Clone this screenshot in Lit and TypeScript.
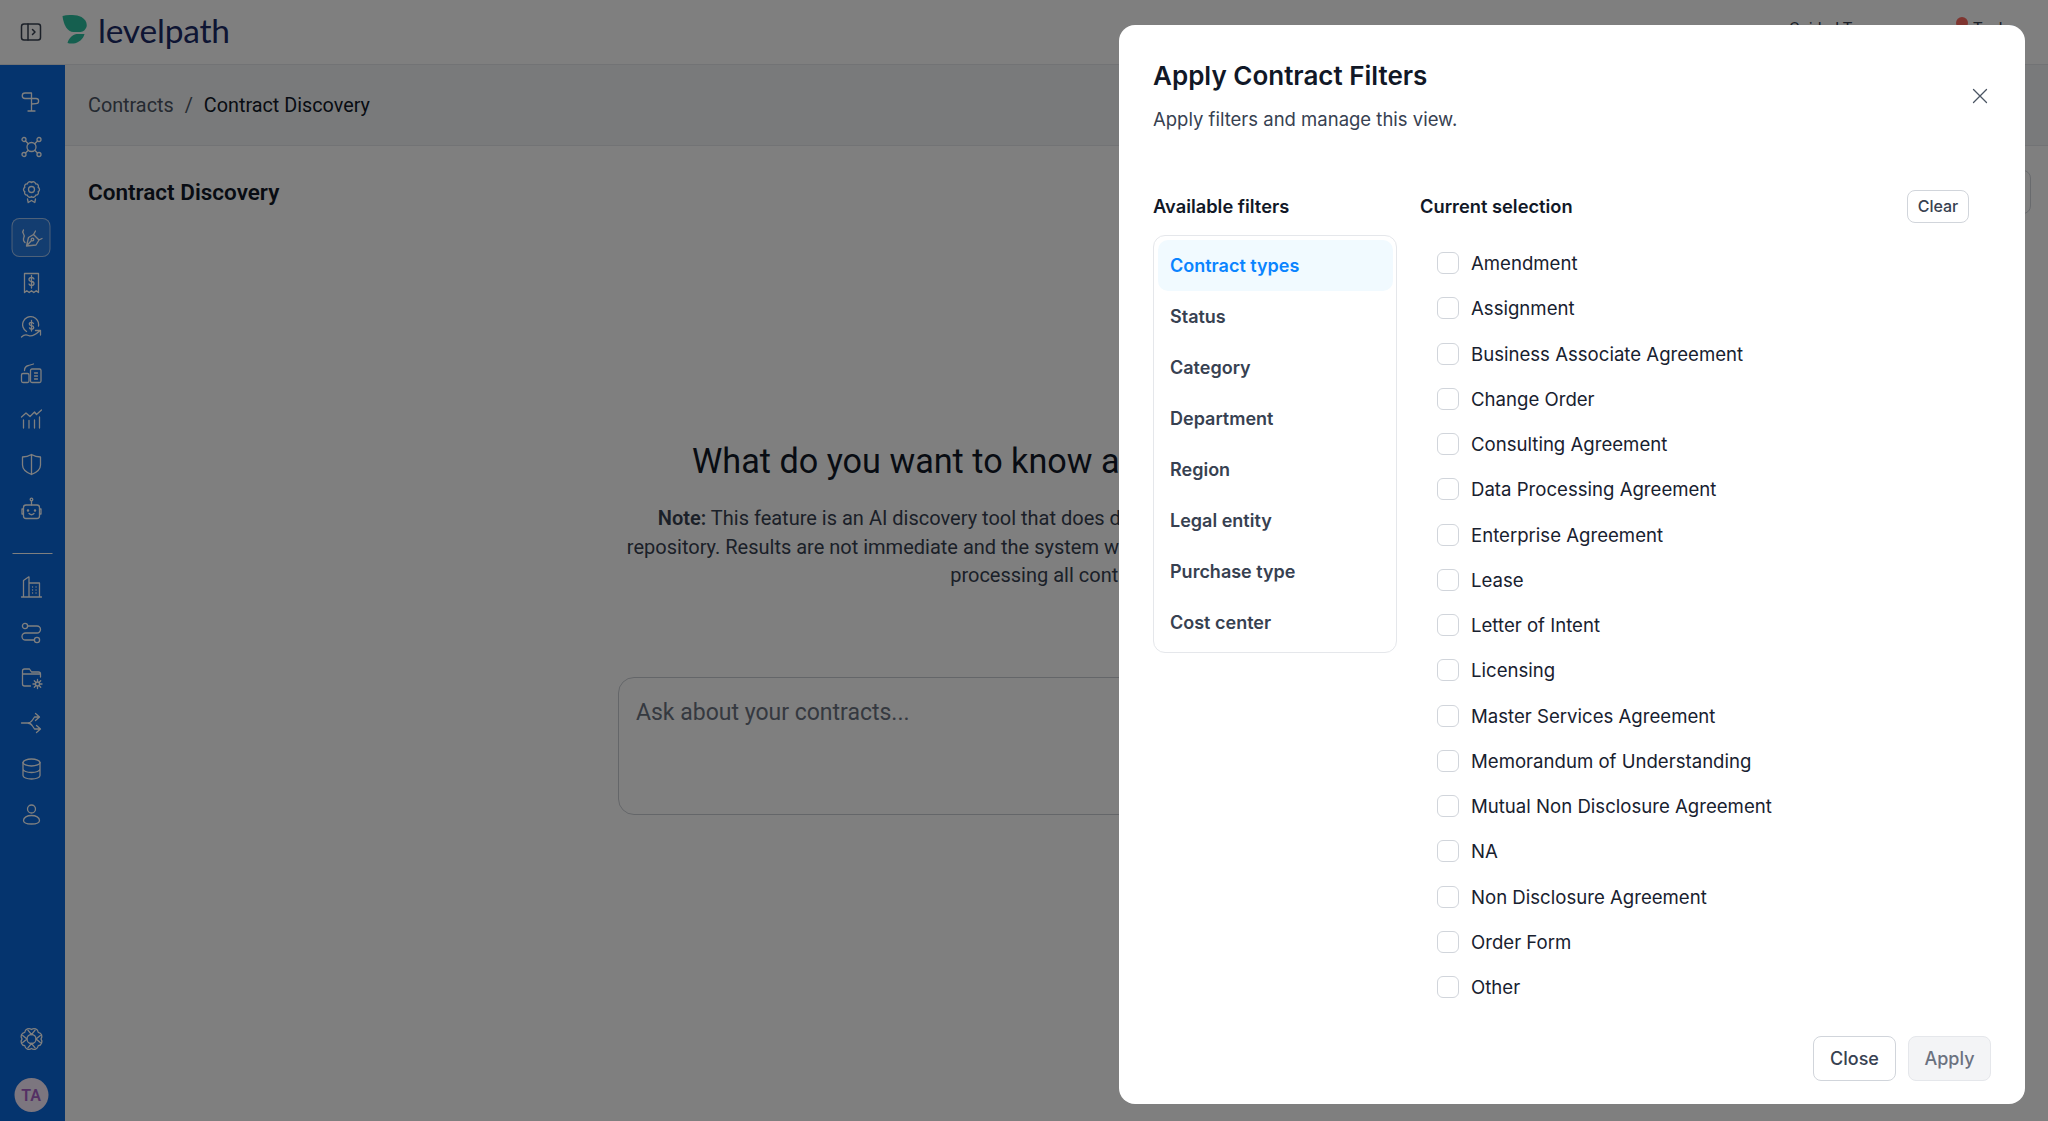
import { LitElement, html, css, svg } from "lit";
import { customElement, state } from "lit/decorators.js";

function scallop(cx: number, cy: number, r: number, n: number, bump: number) {
  let d = "";
  for (let i = 0; i <= n; i++) {
    const a = (i / n) * Math.PI * 2 - Math.PI / 2;
    const x = (cx + r * Math.cos(a)).toFixed(2);
    const y = (cy + r * Math.sin(a)).toFixed(2);
    d += i === 0 ? `M${x} ${y}` : `A${bump} ${bump} 0 0 1 ${x} ${y}`;
  }
  return d + "z";
}

const ICONS: Record<string, unknown> = {
  sign: svg`<path d="M12 8.500V21M8.500 21h7M12 3H5.500a2.700 2.700 0 0 0 0 5.500H12zM12 8.500h4.500c3.500 0 3.500 5 0 5.200L12 14"/>`,
  nodes: svg`<circle cx="12" cy="12" r="4.500"/><circle cx="4.500" cy="4.500" r="2"/><circle cx="19.500" cy="4.500" r="2"/><circle cx="4.500" cy="19.500" r="2"/><circle cx="19.500" cy="19.500" r="2"/><path d="M6 6l2.800 2.800M18 6l-2.800 2.800M6 18l2.800-2.800M18 18l-2.800-2.800"/>`,
  award: svg`<path d="${scallop(12, 9.5, 7, 10, 2.4)}"/><circle cx="12" cy="9.500" r="3"/><path d="M8 19l.7 3.500L12 20.500l3.300 2L16 19"/>`,
  pen: svg`<path d="M7 21l2-8.500 5-3 5.500 5.500-3 5-9.500 1zM7 21l5-5.500M14 9.500l2-3.500M19.500 15l3-1.500"/><circle cx="13" cy="14.500" r="1.300"/><path d="M4 5c-2.500 3 1.800 4 .5 7s-.7 4 1 5.500"/>`,
  receipt: svg`<path d="M5 2.500h14v19l-2.300-1.800-2.400 1.800-2.300-1.800-2.300 1.800-2.400-1.800L5 21.500z"/><path d="M14.500 8c-.4-1-1.300-1.500-2.500-1.500-1.500 0-2.500 .8-2.500 2s1 1.800 2.500 2 2.500 .8 2.500 2-1 2-2.500 2c-1.200 0-2.100-.5-2.500-1.500M12 4.500v12.500"/>`,
  savings: svg`<path d="M7 15.500a8 8 0 1 1 12-5.500"/><path d="M14 7.500c-.4-.8-1.100-1.200-2-1.200-1.300 0-2.200 .7-2.200 1.700s.9 1.500 2.200 1.700 2.200 .7 2.200 1.700-.9 1.700-2.200 1.700c-.9 0-1.600-.4-2-1.200M12 4.500v10.500"/><path d="M2 21c3-3 5-2.500 7-1.500s5 1 11-4.500M16 14.500h5V19"/>`,
  build: svg`<rect x="2" y="12.500" width="7.500" height="9" rx="1.500"/><rect x="11" y="8" width="10.500" height="13.500" rx="1.500"/><path d="M5 9.500c0-2.500 2-4.500 4-5l5-1.500M15 12h3M15 15h3M15 18h3"/>`,
  chart: svg`<path d="M2 10l4.500-4 4 3.500L15 5l2 2.500L22 3M4 21v-8M9.500 21v-7.500M15 21v-8M20 21V10"/>`,
  shield: svg`<path d="M12 2.500c3 1.800 6 2.500 9 2.500v8c0 4.500-4 7.500-9 9.500-5-2-9-5-9-9.500V5c3 0 6-.7 9-2.500zM12 2.500v20"/>`,
  bot: svg`<circle cx="12" cy="2.500" r="1.300"/><path d="M12 4v4"/><rect x="4" y="8" width="16" height="13.500" rx="2.500"/><path d="M4 12H2.500v5H4M20 12h1.500v5H20M9.500 16.500c1.500 1.500 3.500 1.500 5 0"/><circle cx="8.500" cy="13.500" r=".6"/><circle cx="15.500" cy="13.500" r=".6"/>`,
  office: svg`<path d="M2 22h20M4 22V5.500l5-3.500h.5V22M9.500 8H20v14M13 12h.1M16.500 12h.1M13 15h.1M16.500 15h.1M13 18h.1M16.500 18h.1"/>`,
  route: svg`<circle cx="5.500" cy="5" r="2.600"/><circle cx="17.500" cy="19" r="2.600"/><path d="M8.500 5h9a3.500 3.500 0 0 1 0 7H6a3.500 3.500 0 0 0 0 7h8.500"/>`,
  folder: svg`<path d="M11 20H5a2 2 0 0 1-2-2V5a2 2 0 0 1 2-2h5l2 3h7a2 2 0 0 1 2 2v3M3 8h18"/><circle cx="18" cy="18" r="2"/><path d="M18 13.500v2M18 20.500v2M13.500 18h2M20.500 18h2M14.800 14.800l1.400 1.400M19.800 19.800l1.400 1.400M14.800 21.200l1.400-1.400M19.800 16.200l1.400-1.400"/>`,
  split: svg`<path d="M2 12h6c3 0 4-1.500 5-3l2-3h4M8 12c3 0 4 1.500 5 3l2 3h6M16 2.500L20 6l-4 3.500M17 14.500l4 3.500-4 3.500"/>`,
  db: svg`<ellipse cx="12" cy="5.500" rx="8.500" ry="3.500"/><path d="M3.500 5.500v13c0 2 3.800 3.500 8.500 3.500s8.500-1.500 8.500-3.500v-13M3.500 12c0 2 3.800 3.500 8.500 3.500s8.500-1.500 8.500-3.500"/>`,
  user: svg`<circle cx="12" cy="7" r="4"/><path d="M4 18.500c0-3 3.500-5 8-5s8 2 8 5-3.500 3.500-8 3.500-8-.5-8-3.500z"/>`,
  ring: svg`<path d="${scallop(12, 12, 9.5, 8, 4.2)}"/><circle cx="12" cy="12" r="4.500"/><path d="M12 7.500L8.400 3.200M12 7.500l3.600-4.300M16.500 12l4.300-3.600M16.500 12l4.300 3.600M12 16.500l3.600 4.300M12 16.500l-3.600 4.300M7.500 12L3.200 15.600M7.500 12L3.200 8.400"/>`,
};

const TOP = ["sign", "nodes", "award", "pen", "receipt", "savings", "build", "chart", "shield", "bot"];
const MID = ["office", "route", "folder", "split", "db", "user"];
const FILTERS = ["Contract types", "Status", "Category", "Department", "Region", "Legal entity", "Purchase type", "Cost center"];
const OPTIONS = [
  "Amendment", "Assignment", "Business Associate Agreement", "Change Order", "Consulting Agreement",
  "Data Processing Agreement", "Enterprise Agreement", "Lease", "Letter of Intent", "Licensing",
  "Master Services Agreement", "Memorandum of Understanding", "Mutual Non Disclosure Agreement", "NA",
  "Non Disclosure Agreement", "Order Form", "Other",
];

@customElement("app-root")
export class AppRoot extends LitElement {
  @state() active = "Contract types";
  @state() checked = new Set<string>();

  static styles = css`
    :host { display: block; position: relative; width: 100%; height: 100vh; overflow: hidden; background: #fff; font-family: Roboto, "Liberation Sans", sans-serif; color: #111827; }
    .top { height: 64px; border-bottom: 1px solid #e5e7eb; display: flex; align-items: center; padding-left: 20px; gap: 20px; position: relative; }
    .toggle { width: 22px; height: 22px; color: #374151; }
    .brand { display: flex; align-items: center; gap: 10px; margin-top: -4px; }
    .leaf { width: 26px; height: 29px; display: block; margin-top: -2px; }
    .word { font-family: Lato, sans-serif; font-weight: 400; font-size: 33.500px; line-height: 36px; color: #1a2a66; letter-spacing: -0.2px; }
    .peek { position: absolute; left: 1789px; top: 19px; font-size: 16px; line-height: 20px; color: #374151; }
    .peek2 { position: absolute; left: 1973px; top: 19px; font-size: 16px; line-height: 20px; color: #374151; }
    .dot { position: absolute; left: 1956px; top: 17px; width: 12px; height: 12px; border-radius: 50%; background: #ff6b60; }
    .body { display: flex; height: calc(100vh - 65px); }
    .side { width: 65px; flex: none; background: #0a68dd; display: flex; flex-direction: column; align-items: center; padding: 14px 0 9px 0; box-sizing: border-box; color: #fff; }
    .ic { width: 39px; height: 39px; margin: 3.150px 0; flex: none; display: flex; align-items: center; justify-content: center; box-sizing: border-box; border-radius: 8px; transform: translateX(-1.500px); }
    .ic svg { width: 24px; height: 24px; fill: none; stroke: currentColor; stroke-width: 1.300; stroke-linecap: round; stroke-linejoin: round; }
    .ic.on { background: rgba(255,255,255,.12); border: 1.500px solid rgba(255,255,255,.55); }
    .rule { width: 40px; height: 1px; background: #fff; margin: 21px 0 11px; transform: translateX(-.500px); flex: none; }
    .grow { flex: 1; }
    .avatar { width: 34px; height: 34px; border-radius: 50%; background: #f8ecff; color: #a860c8; font-size: 16px; font-weight: 600; display: flex; align-items: center; justify-content: center; margin-top: 16px; transform: translateX(-1.500px); }
    main { flex: 1; min-width: 0; display: flex; flex-direction: column; }
    .crumbs { height: 80px; background: #f3f4f6; border-bottom: 1px solid #e5e7eb; display: flex; align-items: center; padding-left: 23px; font-size: 19.800px; color: #4b5563; gap: 11px; flex: none; }
    .crumbs b { font-weight: 400; color: #111827; }
    .head { padding: 24px 23px 0; display: flex; justify-content: space-between; align-items: center; }
    .head h2 { margin: 0; font-size: 22.500px; font-weight: 600; line-height: 30px; color: #111827; }
    .ghost { width: 60px; height: 44px; border: 1px solid #d1d5db; border-radius: 8px; box-sizing: border-box; margin-right: -6px; }
    .hero { display: flex; flex-direction: column; align-items: center; text-align: center; margin-top: 225px; }
    .hero h1 { margin: 0; padding-left: 10px; font-size: 34.200px; font-weight: 400; line-height: 44px; color: #111827; white-space: nowrap; }
    .hero p { margin: 21px 0 0; font-size: 20px; line-height: 28.500px; color: #374151; white-space: nowrap; }
    .hero p strong { font-weight: 600; }
    .ask { width: 877px; height: 138px; box-sizing: border-box; margin-top: 87px; border: 1px solid #c9cdd3; border-radius: 16px; padding: 20px 17px; text-align: left; font-size: 23px; line-height: 30px; color: #6b7280; }
    .scrim { position: absolute; inset: 0; background: rgba(0,0,0,.5); }
    .modal { position: absolute; left: 1119px; top: 25px; width: 906px; height: 1079px; box-sizing: border-box; background: #fff; border-radius: 16px; padding: 32px 34px 23px; display: flex; flex-direction: column; font-family: Inter, "Liberation Sans", sans-serif; }
    .mhead { position: relative; flex: none; }
    .mhead h3 { margin: 0; font-size: 26px; line-height: 38px; font-weight: 600; color: #111827; }
    .mhead p { margin: 9.500px 0 0; font-size: 18.500px; line-height: 28px; color: #374151; }
    .x { position: absolute; right: 3px; top: 31px; width: 16px; height: 16px; background: none; border: 0; padding: 0; color: #4b5563; cursor: pointer; }
    .x svg { display: block; width: 16px; height: 16px; fill: none; stroke: currentColor; stroke-width: 1.300; stroke-linecap: round; }
    .cols { flex: 1; display: flex; gap: 23px; margin-top: 57px; min-height: 0; }
    .left { width: 244px; flex: none; }
    .right { flex: 1; min-width: 0; padding-right: 22px; }
    .label { font-size: 18.300px; font-weight: 600; line-height: 24px; color: #111827; }
    .lh { height: 33px; display: flex; align-items: center; margin-bottom: 12.500px; }
    .rh { height: 33px; display: flex; align-items: center; justify-content: space-between; margin-bottom: 18px; }
    .list { border: 1.500px solid #e5e7eb; border-radius: 12px; padding: 3.500px 3.500px; box-sizing: border-box; height: 418px; }
    .item { height: 51px; display: flex; align-items: center; padding: 0 12.500px; font-size: 18px; font-weight: 600; color: #374151; border-radius: 10px; cursor: pointer; }
    .item.on { background: #f1faff; color: #0a84ff; }
    .clear { width: 62px; height: 33px; box-sizing: border-box; border: 1.500px solid #d1d5db; border-radius: 8px; background: #fff; font: 500 16px Inter, sans-serif; color: #374151; padding: 0; cursor: pointer; }
    .opt { height: 45.250px; display: flex; align-items: center; gap: 12px; padding-left: 17px; font-size: 18.600px; color: #18212f; cursor: pointer; }
    .box { width: 22px; height: 22px; box-sizing: border-box; border: 1.500px solid #d1d5db; border-radius: 6px; flex: none; background: #fff; }
    .box.on { background: #0a84ff; border-color: #0a84ff; }
    .foot { flex: none; display: flex; justify-content: flex-end; gap: 12px; }
    .btn { width: 83px; height: 45px; box-sizing: border-box; border-radius: 8px; font: 500 18px Inter, sans-serif; padding: 0; }
    .btn.close { background: #fff; border: 1.500px solid #d1d5db; color: #374151; cursor: pointer; }
    .btn.apply { background: #f3f4f6; border: 1.500px solid #e5e7eb; color: #6b7280; }
  `;

  private icon(n: string, on = false) {
    return html`<div class="ic ${on ? "on" : ""}"><svg viewBox="0 0 24 24">${ICONS[n]}</svg></div>`;
  }

  private toggle(o: string) {
    const s = new Set(this.checked);
    s.has(o) ? s.delete(o) : s.add(o);
    this.checked = s;
  }

  render() {
    return html`
      <div class="top">
        <svg class="toggle" viewBox="0 0 22 22" fill="none" stroke="currentColor" stroke-width="1.500" stroke-linecap="round" stroke-linejoin="round"><rect x="1.500" y="3" width="19" height="16" rx="2.500"/><path d="M8 3v16M12.500 8.500l2.500 2.500-2.500 2.500"/></svg>
        <div class="brand">
          <svg class="leaf" viewBox="0 0 25 29"><path fill="#2bbf9f" d="M0 1C6-.500 14-.500 19 2c4 2.500 6 6 5 10-1 2.500-3 5-6 5H11C5 17 1 10 0 1z"/><path fill="#2bbf9f" d="M5 28c1-4 4-8 9-9h8c-1 5-6 9-11 9.500-2 .2-4 .2-6-.5z"/></svg>
          <span class="word">levelpath</span>
        </div>
        <span class="peek">Guided Tour</span><span class="dot"></span><span class="peek2">Tasks</span>
      </div>
      <div class="body">
        <nav class="side">
          ${TOP.map((n) => this.icon(n, n === "pen"))}
          <div class="rule"></div>
          ${MID.map((n) => this.icon(n))}
          <div class="grow"></div>
          ${this.icon("ring")}
          <div class="avatar">TA</div>
        </nav>
        <main>
          <div class="crumbs"><span>Contracts</span><span>/</span><b>Contract Discovery</b></div>
          <div class="head"><h2>Contract Discovery</h2><div class="ghost"></div></div>
          <div class="hero">
            <h1>What do you want to know about your contracts?</h1>
            <p><strong>Note:</strong> This feature is an AI discovery tool that does deep research across your full contract<br />repository. Results are not immediate and the system will notify you by email when it has finished<br />processing all contracts</p>
            <div class="ask">Ask about your contracts...</div>
          </div>
        </main>
      </div>
      <div class="scrim"></div>
      <section class="modal">
        <div class="mhead">
          <h3>Apply Contract Filters</h3>
          <p>Apply filters and manage this view.</p>
          <button class="x" aria-label="Close"><svg viewBox="0 0 16 16"><path d="M1.500 1.500l13 13M14.500 1.500l-13 13"/></svg></button>
        </div>
        <div class="cols">
          <div class="left">
            <div class="lh"><span class="label">Available filters</span></div>
            <div class="list">
              ${FILTERS.map((f) => html`<div class="item ${f === this.active ? "on" : ""}" @click=${() => (this.active = f)}>${f}</div>`)}
            </div>
          </div>
          <div class="right">
            <div class="rh"><span class="label">Current selection</span><button class="clear" @click=${() => (this.checked = new Set())}>Clear</button></div>
            ${OPTIONS.map((o) => html`<div class="opt" @click=${() => this.toggle(o)}><span class="box ${this.checked.has(o) ? "on" : ""}"></span>${o}</div>`)}
          </div>
        </div>
        <div class="foot"><button class="btn close">Close</button><button class="btn apply">Apply</button></div>
      </section>
    `;
  }
}
